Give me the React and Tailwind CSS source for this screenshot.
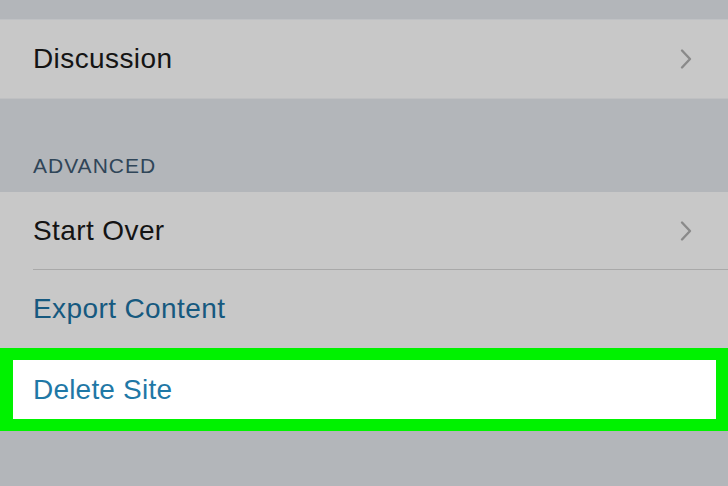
const font = { fontFamily: '"Liberation Sans", Arial, sans-serif' };

function Chevron() {
  return (
    <svg width="16" height="22" viewBox="0 0 16 22" className="mr-[34px]">
      <path d="M4 2.5 L12 11 L4 19.5" fill="none" stroke="#8a8a8a" strokeWidth="2.4" strokeLinecap="round" strokeLinejoin="round" />
    </svg>
  );
}

function Row({ label, color = "text-[#141414]", chevron, border }) {
  return (
    <div className="bg-[#c8c8c8] pl-[33px]">
      <div className={`flex h-[78px] items-center justify-between ${border ? "border-b border-[#a9a9a9]" : ""}`}>
        <span className={`text-[28px] tracking-[0.4px] ${color}`}>{label}</span>
        {chevron && <Chevron />}
      </div>
    </div>
  );
}

export default function App() {
  return (
    <div className="flex h-[486px] w-[728px] flex-col overflow-hidden bg-[#b3b6ba]" style={font}>
      <div className="h-[20px] border-b border-[#bfc1c4]" />
      <Row label="Discussion" chevron />
      <div className="h-[94px] border-t border-[#bfc0c2] flex items-end pl-[33px] pb-[11px]">
        <span className="text-[21px] tracking-[1px] text-[#2f4558]">ADVANCED</span>
      </div>
      <Row label="Start Over" chevron border />
      <Row label="Export Content" color="text-[#16597f]" />
      <div className="border-[12px] border-l-[13px] border-[#00f200] bg-[#c8c8c8]">
        <div className="flex h-[59px] items-center bg-white pl-[20px]">
          <span className="text-[28px] tracking-[0.2px] text-[#1f78a6]">Delete Site</span>
        </div>
      </div>
      <div className="flex-1" />
    </div>
  );
}
